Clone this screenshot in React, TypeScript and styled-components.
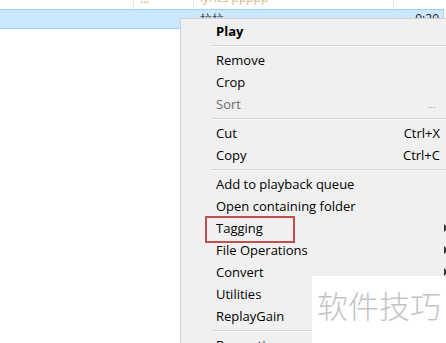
import React from "react";
import styled, { createGlobalStyle } from "styled-components";

const Global = createGlobalStyle`
  html, body { margin: 0; padding: 0; background: #ffffff; }
  body { width: 446px; height: 343px; overflow: hidden; }
  * { box-sizing: border-box; }
`;

const Page = styled.div`
  position: relative;
  width: 446px;
  height: 343px;
  overflow: hidden;
  background: #ffffff;
  font-family: "Open Sans", "Noto Sans", sans-serif;
`;

const List = styled.div`
  display: flex;
  flex-direction: column;
`;

const Row = styled.div<{ $selected?: boolean; $h: number }>`
  display: grid;
  grid-template-columns: 134px 60px 200px 49px 3px;
  height: ${(p) => p.$h}px;
  width: ${(p) => (p.$selected ? 444 : 446)}px;
  background: ${(p) => (p.$selected ? "#cce8ff" : "#ffffff")};
  border-top: ${(p) => (p.$selected ? "1px solid #99d1ff" : "none")};
  border-bottom: ${(p) => (p.$selected ? "1px solid #99d1ff" : "none")};
  border-right: ${(p) => (p.$selected ? "1px solid #99d1ff" : "none")};
  font-size: 12px;
  overflow: hidden;
`;

const Cell = styled.div<{ $line?: boolean; $align?: string; $color?: string; $offset: number }>`
  border-right: ${(p) => (p.$line ? "1px solid #e8e8e8" : "none")};
  text-align: ${(p) => p.$align || "left"};
  color: ${(p) => p.$color || "#222"};
  padding: 0 4px 0 6px;
  line-height: 16px;
  margin-top: ${(p) => p.$offset}px;
  white-space: nowrap;
  overflow: hidden;
`;

const Menu = styled.div`
  position: absolute;
  left: 180px;
  top: 18px;
  width: 280px;
  background: #f0f0f0;
  border-left: 1px solid #d2d2d2;
  border-top: 1px solid #d2d2d2;
  padding: 1px 0 0 1px;
  display: flex;
  flex-direction: column;
  box-shadow: 2px 2px 3px rgba(0, 0, 0, 0.15);
`;

const Item = styled.div<{ $bold?: boolean; $disabled?: boolean }>`
  height: 22px;
  display: flex;
  align-items: center;
  padding-left: 34px;
  padding-right: 20px;
  font-size: 13px;
  font-weight: ${(p) => (p.$bold ? 700 : 400)};
  color: ${(p) => (p.$disabled ? "#6d6d6d" : "#000000")};
  position: relative;
`;

const Label = styled.span<{ $boxed?: boolean }>`
  flex: 1;
  white-space: nowrap;
  position: relative;
  &::after {
    content: "";
    display: ${(p) => (p.$boxed ? "block" : "none")};
    position: absolute;
    left: -11px;
    top: -3px;
    width: 86px;
    height: 23px;
    border: 2px solid #c0504d;
  }
`;

const Shortcut = styled.span`
  width: 60px;
  text-align: right;
  white-space: nowrap;
`;

const Ellipsis = styled.span`
  color: #8a8a8a;
  font-size: 9px;
  margin-right: 5px;
`;

const Arrow = styled.span`
  position: absolute;
  left: 262px;
  top: 7px;
  width: 0;
  height: 0;
  border-top: 4px solid transparent;
  border-bottom: 4px solid transparent;
  border-left: 4px solid #333;
`;

const Separator = styled.div`
  height: 7px;
  display: flex;
  align-items: center;
  padding-left: 30px;
  &::before {
    content: "";
    flex: 1;
    height: 1px;
    background: #d4d4d4;
    box-shadow: 0 1px 0 #fafafa;
  }
`;

const Watermark = styled.div`
  position: absolute;
  left: 312px;
  top: 276px;
  width: 134px;
  height: 67px;
  background: #ffffff;
  padding: 9px 0 0 5px;
  font-family: "Noto Sans CJK SC", sans-serif;
  font-size: 31px;
  font-weight: 300;
  line-height: 40px;
  color: #c4c4c4;
  white-space: nowrap;
`;

type Entry =
  | { kind: "sep" }
  | { kind: "item"; label: string; bold?: boolean; disabled?: boolean; shortcut?: string; sub?: boolean; more?: boolean; boxed?: boolean };

const entries: Entry[] = [
  { kind: "item", label: "Play", bold: true },
  { kind: "sep" },
  { kind: "item", label: "Remove" },
  { kind: "item", label: "Crop" },
  { kind: "item", label: "Sort", disabled: true, more: true },
  { kind: "sep" },
  { kind: "item", label: "Cut", shortcut: "Ctrl+X" },
  { kind: "item", label: "Copy", shortcut: "Ctrl+C" },
  { kind: "sep" },
  { kind: "item", label: "Add to playback queue" },
  { kind: "item", label: "Open containing folder" },
  { kind: "item", label: "Tagging", sub: true, boxed: true },
  { kind: "item", label: "File Operations", sub: true },
  { kind: "item", label: "Convert", sub: true },
  { kind: "item", label: "Utilities", sub: true },
  { kind: "item", label: "ReplayGain", sub: true },
  { kind: "sep" },
  { kind: "item", label: "Properties" },
];

export default function App() {
  return (
    <Page>
      <Global />
      <List>
        <Row $h={9}>
          <Cell $line $offset={-9} $color="#999"> </Cell>
          <Cell $line $offset={-9} $color="#c9a36a">...</Cell>
          <Cell $line $offset={-10} $color="#d8b882">lyrics ppppp</Cell>
          <Cell $offset={-9}> </Cell>
          <Cell $offset={-9}> </Cell>
        </Row>
        <Row $selected $h={20}>
          <Cell $offset={0}> </Cell>
          <Cell $offset={0}> </Cell>
          <Cell $offset={1}>拉拉</Cell>
          <Cell $align="right" $offset={1}>0:20</Cell>
          <Cell $offset={0}> </Cell>
        </Row>
      </List>
      <Menu>
        {entries.map((e, i) =>
          e.kind === "sep" ? (
            <Separator key={i} />
          ) : (
            <Item key={i} $bold={e.bold} $disabled={e.disabled}>
              <Label $boxed={e.boxed}>{e.label}</Label>
              {e.more && <Ellipsis>...</Ellipsis>}
              {e.shortcut && <Shortcut>{e.shortcut}</Shortcut>}
              {e.sub && <Arrow />}
            </Item>
          )
        )}
      </Menu>
      <Watermark>软件技巧</Watermark>
    </Page>
  );
}
